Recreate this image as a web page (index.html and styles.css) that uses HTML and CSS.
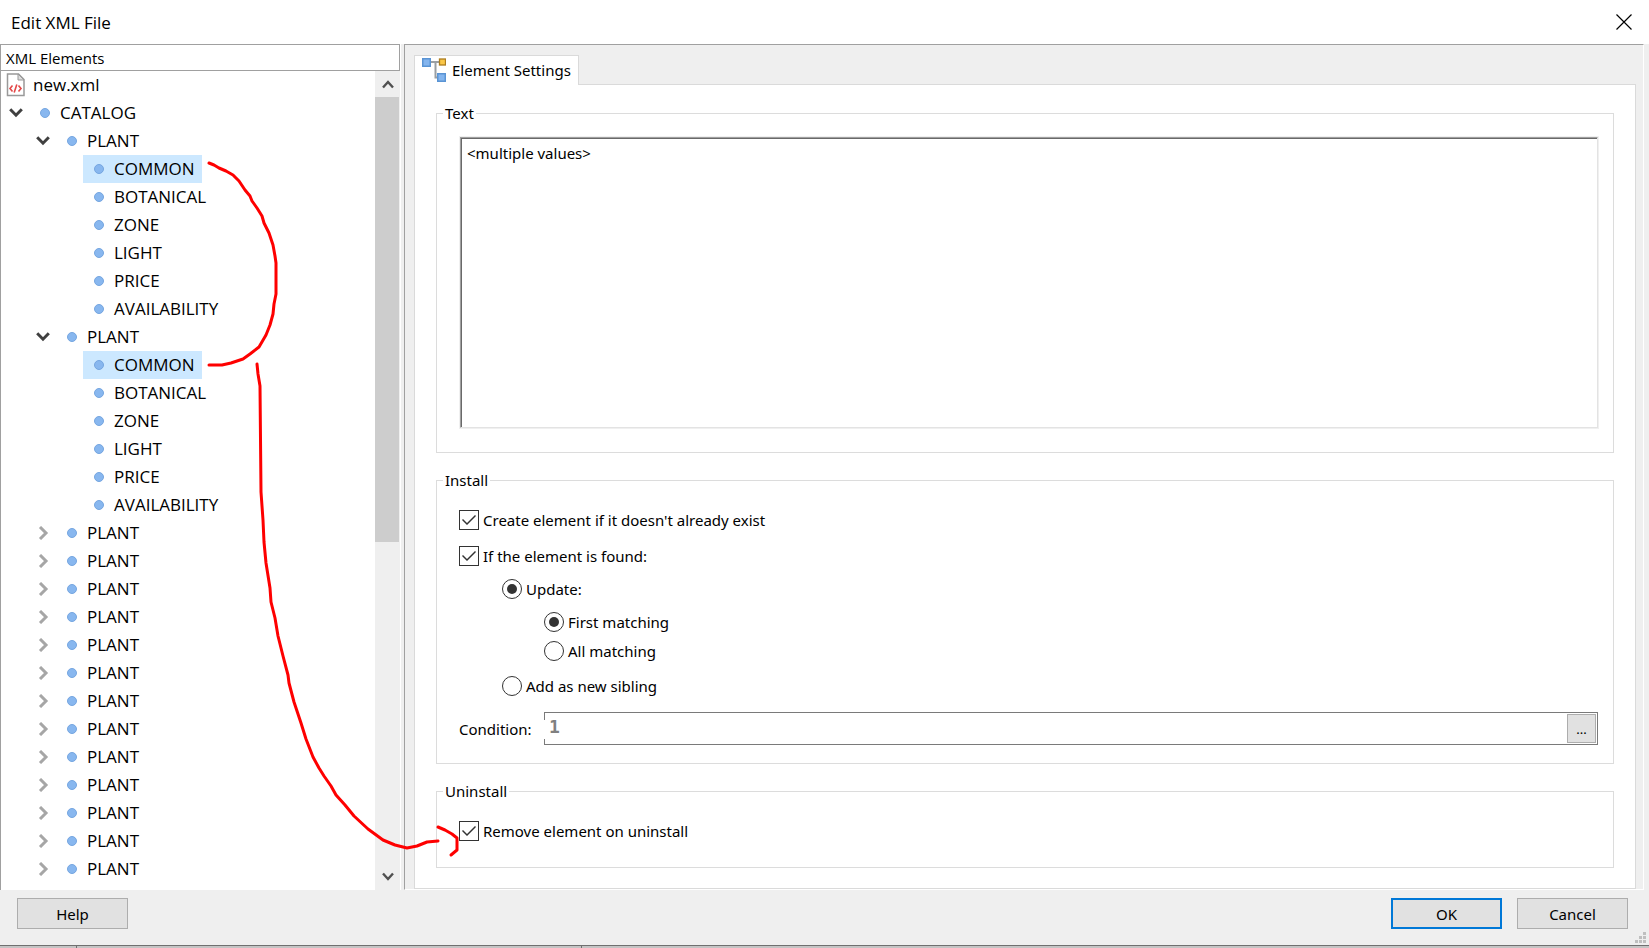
FILE: index.html
```html
<!DOCTYPE html>
<html lang="en">
<head>
<meta charset="utf-8">
<title>Edit XML File</title>
<link rel="stylesheet" href="styles.css">
</head>
<body>
<svg class="defs" aria-hidden="true">
  <symbol id="dot" viewBox="0 0 10 10"><circle cx="5" cy="5" r="4.5" fill="#88b7ef" stroke="#76a6df"/></symbol>
  <symbol id="open" viewBox="0 0 14 10"><path d="M1.200 1.300 7 7.200l5.800-5.900" fill="none" stroke="#404040" stroke-width="3"/></symbol>
  <symbol id="closed" viewBox="0 0 14 14"><path d="M4 1 10 7l-6 6" fill="none" stroke="#a6a6a6" stroke-width="3"/></symbol>
</svg>
<div class="dialog">
  <header class="titlebar">
    <h1 class="title">Edit XML File</h1>
    <button class="close" type="button" aria-label="Close"><svg width="16" height="16" viewBox="0 0 16 16"><path d="M.5.5l15 15M15.500.5l-15 15" stroke="#000" stroke-width="1.200"/></svg></button>
  </header>
  <div class="panes">
    <section class="sidebar">
      <h2 class="column-head">XML Elements</h2>
      <div class="tree-area">
        <ul class="tree" role="tree">
          <li class="row file" role="treeitem">
            <svg width="19" height="24" viewBox="0 0 19 24"><path d="M1.500 1h11l5.500 5.500V22.500H1.500z" fill="#fff" stroke="#999" stroke-width="1.500"/><path d="M12 1v6h6z" fill="#ddd" stroke="#999"/><path d="M6.500 12.500 4 15.500l2.500 3M12.500 12.500l2.500 3-2.500 3M10.800 11.500 8.200 19.500" fill="none" stroke="#e44848" stroke-width="1.600"/></svg>
            <span>new.xml</span>
          </li>
          <li class="row" role="treeitem"><button class="toggle" type="button" aria-label="Collapse"><svg class="open"><use href="#open"/></svg></button><span class="label"><svg class="dot"><use href="#dot"/></svg>CATALOG</span></li>
          <li class="row level-1" role="treeitem"><button class="toggle" type="button" aria-label="Collapse"><svg class="open"><use href="#open"/></svg></button><span class="label"><svg class="dot"><use href="#dot"/></svg>PLANT</span></li>
          <li class="row level-2" role="treeitem"><span class="label selected"><svg class="dot"><use href="#dot"/></svg>COMMON</span></li>
          <li class="row level-2" role="treeitem"><span class="label"><svg class="dot"><use href="#dot"/></svg>BOTANICAL</span></li>
          <li class="row level-2" role="treeitem"><span class="label"><svg class="dot"><use href="#dot"/></svg>ZONE</span></li>
          <li class="row level-2" role="treeitem"><span class="label"><svg class="dot"><use href="#dot"/></svg>LIGHT</span></li>
          <li class="row level-2" role="treeitem"><span class="label"><svg class="dot"><use href="#dot"/></svg>PRICE</span></li>
          <li class="row level-2" role="treeitem"><span class="label"><svg class="dot"><use href="#dot"/></svg>AVAILABILITY</span></li>
          <li class="row level-1" role="treeitem"><button class="toggle" type="button" aria-label="Collapse"><svg class="open"><use href="#open"/></svg></button><span class="label"><svg class="dot"><use href="#dot"/></svg>PLANT</span></li>
          <li class="row level-2" role="treeitem"><span class="label selected"><svg class="dot"><use href="#dot"/></svg>COMMON</span></li>
          <li class="row level-2" role="treeitem"><span class="label"><svg class="dot"><use href="#dot"/></svg>BOTANICAL</span></li>
          <li class="row level-2" role="treeitem"><span class="label"><svg class="dot"><use href="#dot"/></svg>ZONE</span></li>
          <li class="row level-2" role="treeitem"><span class="label"><svg class="dot"><use href="#dot"/></svg>LIGHT</span></li>
          <li class="row level-2" role="treeitem"><span class="label"><svg class="dot"><use href="#dot"/></svg>PRICE</span></li>
          <li class="row level-2" role="treeitem"><span class="label"><svg class="dot"><use href="#dot"/></svg>AVAILABILITY</span></li>
          <li class="row level-1" role="treeitem"><button class="toggle" type="button" aria-label="Expand"><svg class="closed"><use href="#closed"/></svg></button><span class="label"><svg class="dot"><use href="#dot"/></svg>PLANT</span></li>
          <li class="row level-1" role="treeitem"><button class="toggle" type="button" aria-label="Expand"><svg class="closed"><use href="#closed"/></svg></button><span class="label"><svg class="dot"><use href="#dot"/></svg>PLANT</span></li>
          <li class="row level-1" role="treeitem"><button class="toggle" type="button" aria-label="Expand"><svg class="closed"><use href="#closed"/></svg></button><span class="label"><svg class="dot"><use href="#dot"/></svg>PLANT</span></li>
          <li class="row level-1" role="treeitem"><button class="toggle" type="button" aria-label="Expand"><svg class="closed"><use href="#closed"/></svg></button><span class="label"><svg class="dot"><use href="#dot"/></svg>PLANT</span></li>
          <li class="row level-1" role="treeitem"><button class="toggle" type="button" aria-label="Expand"><svg class="closed"><use href="#closed"/></svg></button><span class="label"><svg class="dot"><use href="#dot"/></svg>PLANT</span></li>
          <li class="row level-1" role="treeitem"><button class="toggle" type="button" aria-label="Expand"><svg class="closed"><use href="#closed"/></svg></button><span class="label"><svg class="dot"><use href="#dot"/></svg>PLANT</span></li>
          <li class="row level-1" role="treeitem"><button class="toggle" type="button" aria-label="Expand"><svg class="closed"><use href="#closed"/></svg></button><span class="label"><svg class="dot"><use href="#dot"/></svg>PLANT</span></li>
          <li class="row level-1" role="treeitem"><button class="toggle" type="button" aria-label="Expand"><svg class="closed"><use href="#closed"/></svg></button><span class="label"><svg class="dot"><use href="#dot"/></svg>PLANT</span></li>
          <li class="row level-1" role="treeitem"><button class="toggle" type="button" aria-label="Expand"><svg class="closed"><use href="#closed"/></svg></button><span class="label"><svg class="dot"><use href="#dot"/></svg>PLANT</span></li>
          <li class="row level-1" role="treeitem"><button class="toggle" type="button" aria-label="Expand"><svg class="closed"><use href="#closed"/></svg></button><span class="label"><svg class="dot"><use href="#dot"/></svg>PLANT</span></li>
          <li class="row level-1" role="treeitem"><button class="toggle" type="button" aria-label="Expand"><svg class="closed"><use href="#closed"/></svg></button><span class="label"><svg class="dot"><use href="#dot"/></svg>PLANT</span></li>
          <li class="row level-1" role="treeitem"><button class="toggle" type="button" aria-label="Expand"><svg class="closed"><use href="#closed"/></svg></button><span class="label"><svg class="dot"><use href="#dot"/></svg>PLANT</span></li>
          <li class="row level-1" role="treeitem"><button class="toggle" type="button" aria-label="Expand"><svg class="closed"><use href="#closed"/></svg></button><span class="label"><svg class="dot"><use href="#dot"/></svg>PLANT</span></li>
        </ul>
        <div class="scrollbar">
          <button class="scroll-btn" type="button" aria-label="Scroll up"><svg width="12" height="10" viewBox="0 0 12 10"><path d="M1 8.500 6 3l5 5.500" fill="none" stroke="#505050" stroke-width="2.400"/></svg></button>
          <div class="track"><div class="thumb"></div></div>
          <button class="scroll-btn" type="button" aria-label="Scroll down"><svg width="12" height="10" viewBox="0 0 12 10"><path d="M1 1.500 6 7l5-5.500" fill="none" stroke="#505050" stroke-width="2.400"/></svg></button>
        </div>
      </div>
    </section>
    <main class="details">
      <div class="tabs" role="tablist">
        <button class="tab" type="button" role="tab" aria-selected="true">
          <svg width="24" height="24" viewBox="0 0 24 24"><path d="M8 4h10M13.500 4v15.500H17" fill="none" stroke="#9a9fa3" stroke-width="2"/><rect x=".75" y=".75" width="7.500" height="7.500" fill="#84b5ee" stroke="#5a94d4" stroke-width="1.500"/><rect x="17.500" y="1" width="6" height="6" fill="#fac748" stroke="#ad7d1f" stroke-width="1.300"/><rect x="15.750" y="15.750" width="7.500" height="7.500" fill="#84b5ee" stroke="#5a94d4" stroke-width="1.500"/></svg>
          <span>Element Settings</span>
        </button>
        <div class="tab-rest"></div>
      </div>
      <form class="sheet">
        <fieldset class="group text-group">
          <legend>Text</legend>
          <div class="text-frame"><textarea class="text-value" aria-label="Text">&lt;multiple values&gt;</textarea></div>
        </fieldset>
        <fieldset class="group install-group">
          <legend>Install</legend>
          <label class="option"><input class="check" type="checkbox" checked>Create element if it doesn't already exist</label>
          <label class="option found"><input class="check" type="checkbox" checked>If the element is found:</label>
          <label class="option update"><input class="radio" type="radio" name="mode" checked>Update:</label>
          <label class="option match-first"><input class="radio" type="radio" name="match" checked>First matching</label>
          <label class="option match-all"><input class="radio" type="radio" name="match">All matching</label>
          <label class="option sibling"><input class="radio" type="radio" name="mode">Add as new sibling</label>
          <div class="condition">
            <label class="condition-label" for="condition">Condition:</label>
            <div class="condition-box">
              <input class="condition-input" id="condition" type="text" value="1">
              <button class="browse" type="button">...</button>
            </div>
          </div>
        </fieldset>
        <fieldset class="group uninstall-group">
          <legend>Uninstall</legend>
          <label class="option"><input class="check" type="checkbox" checked>Remove element on uninstall</label>
        </fieldset>
      </form>
    </main>
  </div>
  <footer class="actions">
    <button class="btn" type="button">Help</button>
    <div class="actions-right">
      <button class="btn primary" type="button">OK</button>
      <button class="btn" type="button">Cancel</button>
    </div>
    <svg class="grip" width="12" height="12" viewBox="0 0 12 12" fill="#bfbfbf"><path d="M8 0h3v3H8zM8 4h3v3H8zM4 4h3v3H4zM8 8h3v3H8zM4 8h3v3H4zM0 8h3v3H0z"/></svg>
  </footer>
</div>
<div class="under"></div>
<svg class="ink" width="480" height="880" viewBox="0 0 480 880" fill="none" stroke="#fe0000" stroke-width="3" stroke-linecap="round" stroke-linejoin="round" aria-hidden="true">
  <path d="M209 163 214 165 219 168 226 171 233 175 239 181 245 190 250 196 252 201 257 208 262 216 264 223 269 233 273 245 275 256 276 263V294L274 304 273 314 270 325 266 335 259 347 250 354 243 359 231 363 222 365H209"/>
  <path d="M257 364 258 374 260 386 261 492 263 520 264 542 266 563 270 588 271 602 275 618 278 636 283 656 288 675 289 683 294 702 301 723 306 739 313 757 319 768 324 776 331 786 336 795 345 805 354 816 368 829 383 840 395 845 407 848 417 846 427 842 438 841"/>
  <path d="M438 827 445 830 452 834 457 838V850L451 855"/>
</svg>
</body>
</html>
```
FILE: styles.css
```css
* { box-sizing: border-box; }
body {
  margin: 0;
  height: 100vh;
  display: flex;
  flex-direction: column;
  font: 15px/20px "Noto Sans", "Open Sans", sans-serif;
  color: #000;
  background: #efefef;
  position: relative;
  overflow: hidden;
}
button, input, textarea { font: inherit; color: inherit; margin: 0; }
.defs { position: absolute; width: 0; height: 0; }
.dialog { flex: 1; min-height: 0; display: flex; flex-direction: column; }
.titlebar {
  height: 44px;
  flex: none;
  display: flex;
  align-items: center;
  justify-content: space-between;
  padding: 0 17px 0 11px;
  background: #fff;
}
.title { margin: 0; padding-top: 2px; font: 17px/24px "Open Sans", sans-serif; }
.close { width: 16px; height: 16px; padding: 0; border: 0; background: none; display: flex; }
.panes { flex: 1; min-height: 0; display: flex; gap: 3px; padding-right: 5px; }
.sidebar {
  width: 401px;
  flex: none;
  display: flex;
  flex-direction: column;
  border-right: 1px solid #fff;
  background: #efefef;
}
.column-head {
  margin: 0;
  height: 27px;
  flex: none;
  padding: 0 5px;
  border: 1px solid #a0a0a0;
  background: #fff;
  font: 15px/26px "Open Sans", sans-serif;
}
.tree-area { flex: 1; min-height: 0; display: flex; border-left: 1px solid #a0a0a0; }
.tree {
  flex: 1;
  margin: 0;
  padding: 0;
  list-style: none;
  overflow: hidden;
  background: #fff;
  font: 17px/28px "Open Sans", sans-serif;
}
.row { display: flex; height: 28px; align-items: center; padding-left: 1px; }
.file { padding-left: 5px; gap: 8px; }
.level-1 { padding-left: 28px; }
.level-2 { padding-left: 82px; }
.toggle {
  width: 27px;
  height: 28px;
  padding: 0;
  border: 0;
  background: none;
  display: flex;
  align-items: center;
  justify-content: center;
}
.open { width: 14px; height: 10px; }
.closed { width: 14px; height: 14px; }
.label { display: flex; align-items: center; gap: 10px; padding: 0 7px 0 11px; }
.dot { width: 10px; height: 10px; }
.selected { background: #cce8ff; }
.scrollbar { width: 25px; flex: none; display: flex; flex-direction: column; }
.scroll-btn {
  height: 26px;
  padding: 0;
  border: 0;
  background: none;
  display: flex;
  align-items: center;
  justify-content: center;
}
.track { flex: 1; padding-right: 1px; }
.thumb { height: 58%; background: #cdcdcd; }
.details {
  flex: 1;
  min-width: 0;
  display: flex;
  flex-direction: column;
  padding: 10px 7px 0 9px;
  border: 1px solid #a0a0a0;
  border-right-color: #fff;
  border-bottom-color: #fff;
}
.tabs { display: flex; flex: none; height: 30px; }
.tab {
  display: flex;
  align-items: center;
  gap: 6px;
  padding: 0 7px 2px;
  border: 1px solid #dadada;
  border-bottom: 0;
  background: #fff;
}
.tab-rest { flex: 1; border-bottom: 1px solid #dadada; }
.sheet {
  flex: 1;
  min-height: 0;
  display: flex;
  flex-direction: column;
  gap: 16px;
  padding: 17px 21px 20px;
  border: 1px solid #dadada;
  border-top: 0;
  background: #fff;
}
.group { margin: 0; min-width: 0; padding: 0 15px 0 22px; border: 1px solid #dcdcdc; }
.group legend { margin-left: -16px; padding: 0 2px; line-height: 22px; }
.text-group { flex: 1; min-height: 0; padding: 12px 14px 23px 22px; }
.text-frame { height: 100%; border: 1px solid #f0f0f0; display: flex; }
.text-value {
  flex: 1;
  resize: none;
  outline: 0;
  padding: 5px 6px;
  border: 1px solid #a0a0a0;
  border-right-color: #e3e3e3;
  border-bottom-color: #e3e3e3;
  box-shadow: inset 1px 1px #696969;
  background: #fff;
}
.install-group { padding-top: 19px; padding-bottom: 18px; }
.uninstall-group { padding-top: 19px; padding-bottom: 26px; }
.option { display: flex; align-items: center; gap: 4px; height: 20px; }
.found { margin-top: 16px; }
.update { margin: 13px 0 0 43px; }
.match-first { margin: 13px 0 0 85px; }
.match-all { margin: 9px 0 0 85px; }
.sibling { margin: 15px 0 0 43px; }
.check, .radio {
  appearance: none;
  flex: none;
  width: 20px;
  height: 20px;
  border: 1px solid #333;
  background: #fff;
  display: grid;
  place-items: center;
}
.check:checked::before {
  content: "";
  width: 18px;
  height: 18px;
  background: #333;
  clip-path: polygon(2px 9px, 3px 8px, 7px 12px, 15px 4px, 16px 5px, 7px 14px);
}
.radio { border-radius: 50%; }
.radio:checked::before { content: ""; width: 10px; height: 10px; border-radius: 50%; background: #333; }
.condition { display: flex; align-items: center; margin-top: 16px; }
.condition-label { width: 85px; }
/* The left edge is drawn only at its two corners. */
.condition-box {
  flex: 1;
  display: flex;
  height: 33px;
  padding: 1px;
  border: 1px solid #7a7a7a;
  border-left: 0;
  background:
    linear-gradient(#7a7a7a, #7a7a7a) left top / 1px 7px no-repeat,
    linear-gradient(#7a7a7a, #7a7a7a) left bottom / 1px 5px no-repeat;
}
.condition-input {
  flex: 1;
  min-width: 0;
  padding: 0 4px 4px;
  border: 0;
  outline: 0;
  background: none;
  font: 18px/20px "DejaVu Sans Mono", monospace;
  font-weight: 700;
  color: #808080;
}
.browse { width: 29px; padding: 0; border: 1px solid #adadad; background: #e1e1e1; font-size: 13px; }
.actions {
  flex: none;
  height: 55px;
  display: flex;
  align-items: flex-start;
  justify-content: space-between;
  padding: 8px 21px 0 17px;
  position: relative;
}
.actions-right { display: flex; gap: 15px; }
.btn { width: 111px; height: 31px; padding: 0; border: 1px solid #adadad; background: #e1e1e1; }
.primary { border: 2px solid #0078d7; }
.grip { position: absolute; right: 2px; bottom: 1px; }
.under {
  flex: none;
  height: 3px;
  border-top: 1px solid #707070;
  background:
    linear-gradient(#707070, #707070) 76px 0 / 1px 2px no-repeat,
    linear-gradient(#707070, #707070) 581px 0 / 1px 2px no-repeat,
    #c4c4c4;
}
.ink { position: absolute; left: 0; top: 0; pointer-events: none; }
```
